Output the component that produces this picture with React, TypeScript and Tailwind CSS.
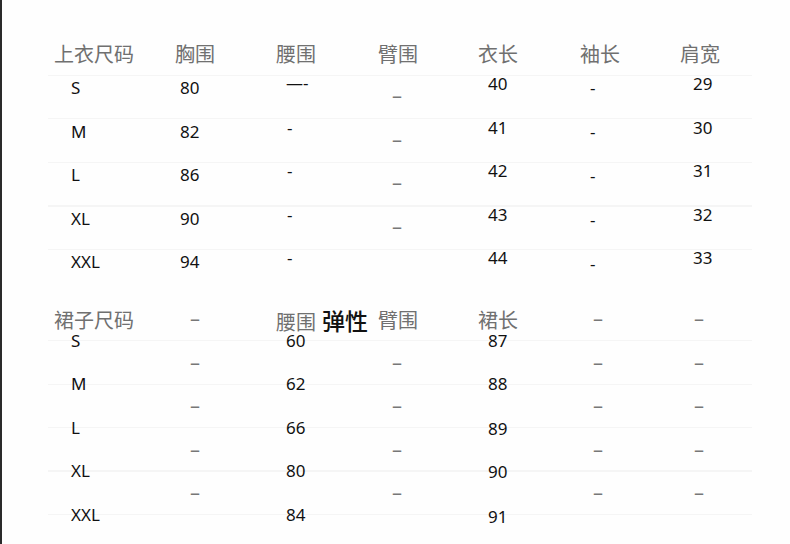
import React from 'react';

type Cell = { t: string; cls: string };

const font = "font-['Noto_Sans','Noto_Sans_CJK_SC',sans-serif]";
const cols = 'grid grid-cols-[121px_101px_102px_100px_102px_100px_72px]';
const num = 'text-[17px] leading-6 text-[#111]';
const num2 = 'text-[17px] leading-[18px] text-[#111]';
const dash = 'text-[20px] leading-7 text-[#777]';

const topRows: Cell[][] = [
  ['S', '80', '—-', '–', '40', '-', '29'],
  ['M', '82', '-', '–', '41', '-', '30'],
  ['L', '86', '-', '–', '42', '-', '31'],
  ['XL', '90', '-', '–', '43', '-', '32'],
  ['XXL', '94', '-', '', '44', '-', '33'],
].map((r, i) => [
  { t: r[0], cls: `${num} pl-[17px] pt-2` },
  { t: r[1], cls: `${num} pl-[5px] pt-2` },
  { t: r[2], cls: i === 0 ? `${num} pl-[10px] pt-[3px]` : `${num} pl-[11px] pt-[4px]` },
  { t: r[3], cls: `${dash} text-[#555] pl-[14px] pt-[14px]` },
  { t: r[4], cls: `${num} pl-[10px] pt-[4px]` },
  { t: r[5], cls: `${num} pl-[10px] ${['pt-[8px]', 'pt-[8px]', 'pt-[9px]', 'pt-[9px]', 'pt-[10px]'][i]}` },
  { t: r[6], cls: `${num} pl-[13px] pt-[4px]` },
]);

const skirtRows: Cell[][] = [
  ['S', '60', '87'],
  ['M', '62', '88'],
  ['L', '66', '89'],
  ['XL', '80', '90'],
  ['XXL', '84', '91'],
].map((r, i) => {
  const d = i < 4 ? '–' : '';
  return [
    { t: r[0], cls: `${num2} pl-[17px] pt-[11px]` },
    { t: d, cls: `${dash} pl-[15px] pt-[28px]` },
    { t: r[1], cls: `${num2} pl-[10px] pt-[11px]` },
    { t: d, cls: `${dash} pl-[14px] pt-[28px]` },
    { t: r[2], cls: `${num2} pl-[10px] ${['pt-[11px]', 'pt-[11px]', 'pt-[12px]', 'pt-[12px]', 'pt-[13px]'][i]}` },
    { t: d, cls: `${dash} pl-[13px] pt-[28px]` },
    { t: d, cls: `${dash} pl-[14px] pt-[28px]` },
  ];
});

const Rows: React.FC<{ rows: Cell[][]; lines: string }> = ({ rows, lines }) => (
  <div className={`-ml-[6px] pl-[6px] w-[704px] ${lines}`}>
    {rows.map((row, i) => (
      <div key={i} className={`${cols} h-[43.5px]`}>
        {row.map((c, j) => (
          <div key={j} className={c.cls}>
            {c.t}
          </div>
        ))}
      </div>
    ))}
  </div>
);

export default function App() {
  const head = 'text-[20px] text-[#707070]';
  return (
    <div className={`${font} w-[790px] h-[544px] overflow-hidden bg-[#fefefe] border-l-2 border-[#2a2a2a] pl-[52px]`}>
      {/* 上衣 */}
      <div className="pt-[41px]">
        <div className={`${cols} h-[27px] leading-7 ${head}`}>
          <div>上衣尺码</div>
          <div>胸围</div>
          <div>腰围</div>
          <div>臂围</div>
          <div>衣长</div>
          <div>袖长</div>
          <div>肩宽</div>
        </div>
        <Rows
          rows={topRows}
          lines="bg-[repeating-linear-gradient(to_bottom,transparent_0_7px,#f5f5f5_7px_8px,transparent_8px_43.5px)]"
        />
      </div>

      {/* 裙子 */}
      <div className="pt-[25.5px]">
        <div className={`${cols} h-[9.5px] leading-5 ${head}`}>
          <div>裙子尺码</div>
          <div className="pl-[15px] leading-4 text-[#777]">–</div>
          <div className="whitespace-nowrap">
            腰围<span className="ml-[6px] text-[23px] font-medium text-[#111]">弹性</span>
          </div>
          <div>臂围</div>
          <div>裙长</div>
          <div className="pl-[13px] leading-4 text-[#777]">–</div>
          <div className="pl-[14px] leading-4 text-[#777]">–</div>
        </div>
        <Rows
          rows={skirtRows}
          lines="bg-[repeating-linear-gradient(to_bottom,transparent_0_19px,#f5f5f5_19px_20px,transparent_20px_43.5px)]"
        />
      </div>
    </div>
  );
}
